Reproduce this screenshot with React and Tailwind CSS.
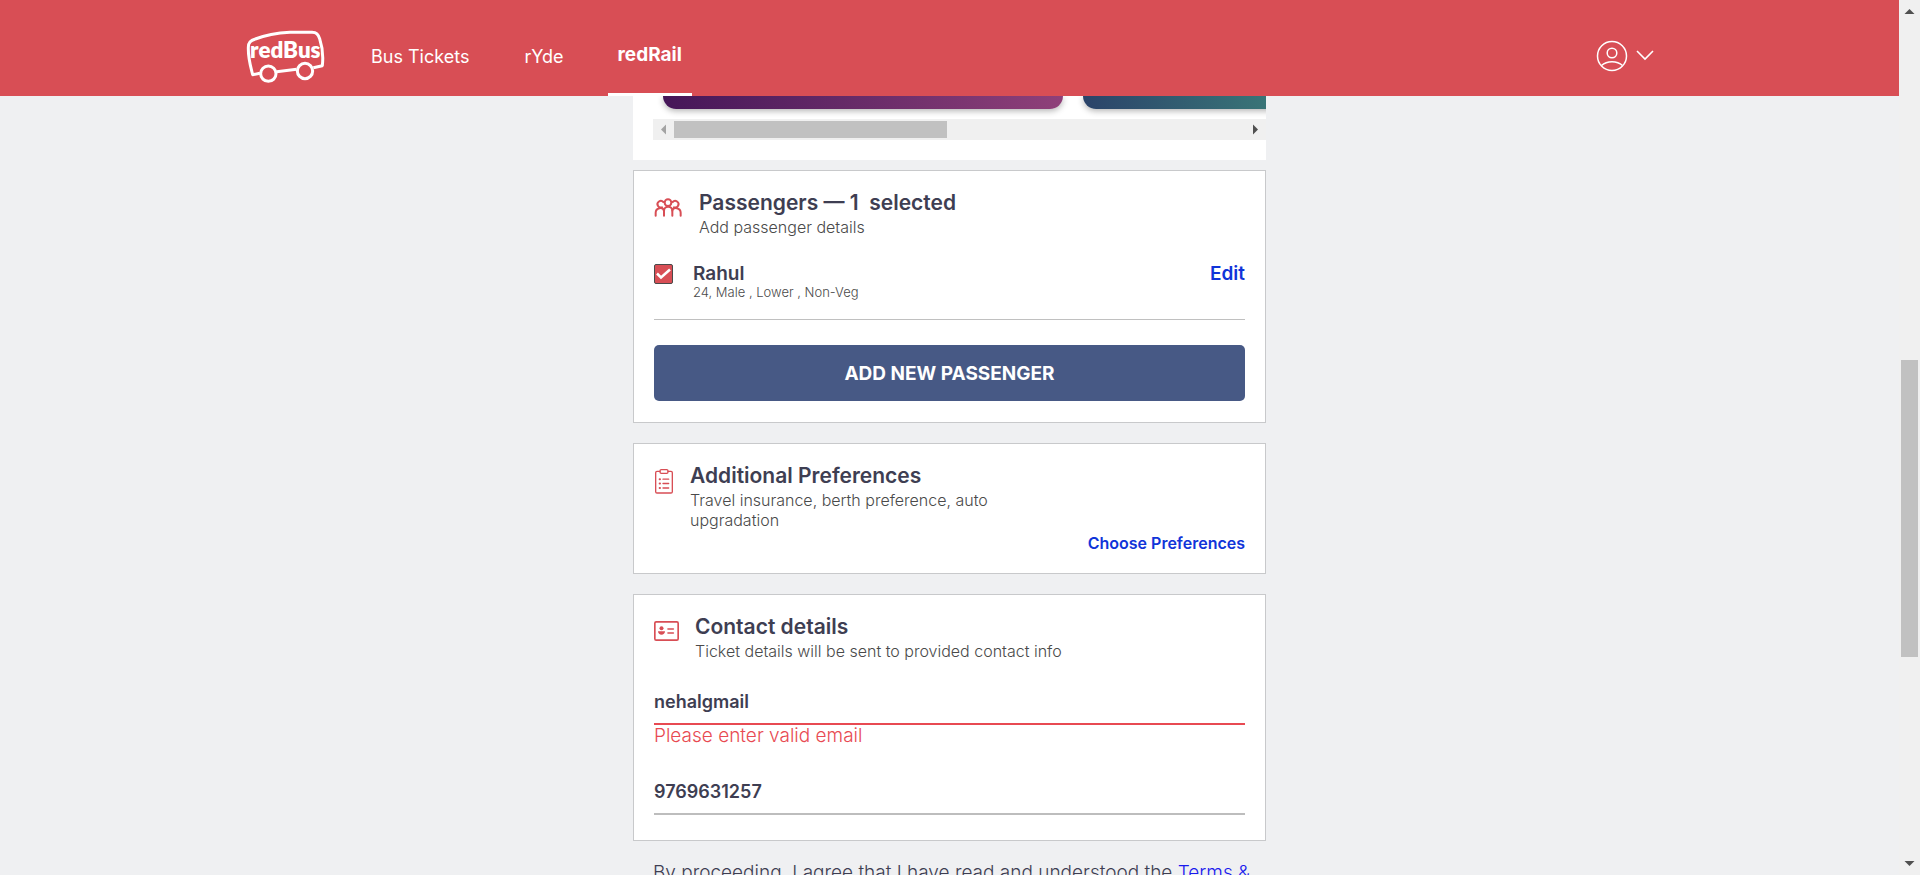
import React from "react";

function BusLogo() {
  return (
    <svg viewBox="45 57 243 168" className="h-14 w-[81px]" fill="none" stroke="#fff" strokeWidth="9" strokeLinejoin="round" role="img" aria-label="redBus">
      <path d="M90 190 L68 194 C61 166 54 145 55 112 C55 97 61 92 76 87 C110 74 145 69 180 67 H246 C260 67 264 73 269 86 C277 110 280 140 277 167 L250 173" />
      <path d="M140 185 L200 178" />
      <circle cx="115" cy="191" r="23" />
      <circle cx="225" cy="183" r="23" />
      <text x="166" y="145" textAnchor="middle" fill="#fff" stroke="none" fontFamily="Lato, 'Open Sans', sans-serif" fontWeight="800" fontSize="67">redBus</text>
    </svg>
  );
}

function PeopleIcon() {
  return (
    <svg viewBox="102 94 87 63" className="mt-2 h-[21px] w-[29px]" fill="none" stroke="#d84e55" strokeWidth="6" strokeLinecap="round">
      <path d="M130 109 A 10 10 0 1 0 126 125" />
      <path d="M158 109 A 10 10 0 1 1 162 125" />
      <circle cx="144" cy="111" r="10" />
      <path d="M107 150 V141 C107 125 129 123 132 135" />
      <path d="M182 150 V141 C182 125 159 123 157 135" />
      <path d="M132 150 V136 C132 119 157 119 157 136 V150" />
    </svg>
  );
}

function ClipboardIcon() {
  return (
    <svg viewBox="102 111 60 81" className="mt-[6px] h-[27px] w-5" fill="none" stroke="#d84e55" strokeWidth="4" strokeLinecap="round">
      <path d="M120 121 H111 Q107 121 107 125 V182 Q107 186 111 186 H153 Q157 186 157 182 V125 Q157 121 153 121 H144" />
      <rect x="120" y="116" width="24" height="11" rx="4" />
      <path d="M129 144.500 H146 M129 157.500 H146 M129 171 H146" />
      <path d="M119 144.500 H120 M119 157.500 H120 M119 171 H120" strokeWidth="6" />
    </svg>
  );
}

function ContactIcon() {
  return (
    <svg viewBox="102 90 75 60" className="mt-2 h-5 w-[25px]" fill="none" stroke="#d84e55" strokeWidth="5" strokeLinecap="round">
      <rect x="104.500" y="92.500" width="70" height="55" rx="4" />
      <path d="M144 114 H160 M144 126 H160" />
      <circle cx="124.500" cy="112" r="6" fill="#d84e55" stroke="none" />
      <path d="M114 121 H135 C135 135 114 135 114 121 Z" fill="#d84e55" stroke="none" />
    </svg>
  );
}

function SectionHead({ icon, iconWidth, title, children }) {
  return (
    <div className="flex">
      <div className={`${iconWidth} shrink-0`}>{icon}</div>
      <div className="min-w-0">
        <h2 className="whitespace-pre text-[21px] leading-7 font-semibold">{title}</h2>
        <p className="max-w-[330px] text-base leading-5 font-light text-[#4a4a4a] has-[span]:max-w-none">{children}</p>
      </div>
    </div>
  );
}

function Card({ className, children }) {
  return <section className={`border border-[#c8c9cb] bg-white px-5 pt-[18px] ${className}`}>{children}</section>;
}

function Header() {
  return (
    <header className="flex h-24 shrink-0 items-center bg-[#d84e55] pr-[245px] pl-[245px] text-white">
      <a href="#home" className="mt-[18px] mr-[45px]"><BusLogo /></a>
      <nav className="flex h-full items-center text-lg">
        <a href="#bus" className="mt-[18px] mr-[55px]">Bus Tickets</a>
        <a href="#ryde" className="mt-[18px] mr-[44px]">rYde</a>
        <a href="#rail" className="flex h-full items-center border-b-3 border-white px-[10px] pt-4 text-[19px] font-bold">redRail</a>
      </nav>
      <button type="button" aria-label="Account" className="mt-4 ml-auto flex items-center gap-2">
        <svg viewBox="0 0 32 32" className="size-8" fill="none" stroke="#fff" strokeWidth="1.500">
          <circle cx="16" cy="16" r="14.500" />
          <circle cx="16" cy="13" r="4.800" />
          <path d="M5.500 25.500 C11 20.500 21 20.500 26.500 25.500" />
        </svg>
        <svg viewBox="0 0 18 12" className="h-3 w-[18px]" fill="none" stroke="#fff" strokeWidth="1.600">
          <path d="M1 1 L9 9 L17 1" />
        </svg>
      </button>
    </header>
  );
}

function Offers() {
  return (
    <div className="bg-white pb-5 pl-5">
      <div className="flex h-[23px] gap-5 overflow-hidden pl-[10px]">
        <div className="h-[13px] w-[400px] shrink-0 rounded-b-2xl bg-linear-to-r from-[#451658] to-[#8f4079] shadow-[0_2px_6px_rgba(0,0,0,0.3)]" />
        <div className="h-[13px] w-[400px] shrink-0 rounded-b-2xl bg-linear-to-r from-[#2b4369] via-[#3a7978] to-[#3a7978] shadow-[0_2px_6px_rgba(0,0,0,0.3)]" />
      </div>
      <div className="flex h-[21px] items-center bg-[#f0f0f0]">
        <svg viewBox="0 0 21 21" className="size-[21px]"><path d="M8 10.500 L13 5.500 V15.500 Z" fill="#a3a3a3" /></svg>
        <div className="h-[17px] w-[273px] bg-[#c1c1c1]" />
        <svg viewBox="0 0 21 21" className="ml-auto size-[21px]"><path d="M13 10.500 L8 5.500 V15.500 Z" fill="#505050" /></svg>
      </div>
    </div>
  );
}

function PageScrollbar() {
  return (
    <div className="flex w-[21px] shrink-0 flex-col items-center bg-[#f0f0f0]">
      <svg viewBox="0 0 21 21" className="size-[21px] shrink-0"><path d="M10.500 9 L15.500 14 H5.500 Z" fill="#505050" /></svg>
      <div className="flex w-full flex-1 flex-col items-center">
        <div className="basis-[339px]" />
        <div className="w-[17px] basis-[297px] bg-[#c1c1c1]" />
      </div>
      <svg viewBox="0 0 21 21" className="size-[21px] shrink-0"><path d="M10.500 12 L15.500 7 H5.500 Z" fill="#505050" /></svg>
    </div>
  );
}

const inputClass = "block h-[45px] w-full border-b-2 bg-transparent text-lg font-semibold outline-none";

export default function App() {
  return (
    <div className="flex h-screen overflow-hidden bg-[#eff0f2] font-['Inter',sans-serif] text-[#3e3e52]">
      <div className="flex min-w-0 flex-1 flex-col overflow-hidden">
        <Header />
        <main className="mx-auto min-h-0 w-1/3 min-w-[560px] flex-1">
          <Offers />

          <Card className="mt-[10px] pb-[21px]">
            <SectionHead icon={<PeopleIcon />} iconWidth="w-[45px]" title={"Passengers — 1  selected"}>Add passenger details</SectionHead>
            <div className="mt-[27px] flex border-b border-[#c0c0c0] pb-[19px]">
              <label className="flex flex-1">
                <span className="grid h-5 w-[39px] shrink-0 grid-cols-[19px]">
                  <input type="checkbox" defaultChecked className="col-start-1 row-start-1 h-5 w-[19px] appearance-none rounded-[2px] border border-[#4a4a4a] bg-[#d84e55]" />
                  <svg viewBox="0 0 19 20" className="pointer-events-none col-start-1 row-start-1 h-5 w-[19px]" fill="none" stroke="#fff" strokeWidth="2.500">
                    <path d="M3 9.500 L7 13.500 L16 5.500" />
                  </svg>
                </span>
                <span>
                  <span className="block text-[19px] leading-5 font-semibold">Rahul</span>
                  <span className="block text-[13px] leading-4 font-light text-[#4a4a4a]">24, Male , Lower , Non-Veg</span>
                </span>
              </label>
              <button type="button" className="self-start text-[19px] leading-5 font-semibold text-[#1034d9]">Edit</button>
            </div>
            <button type="button" className="mt-[25px] block h-14 w-full rounded-[5px] bg-[#475985] pt-[2px] text-[19px] font-bold text-white">ADD NEW PASSENGER</button>
          </Card>

          <Card className="mt-5 pb-5">
            <SectionHead icon={<ClipboardIcon />} iconWidth="w-9" title="Additional Preferences">Travel insurance, berth preference, auto upgradation</SectionHead>
            <button type="button" className="mt-[3px] ml-auto block text-base leading-5 font-semibold text-[#1034d9]">Choose Preferences</button>
          </Card>

          <Card className="mt-5 pb-[25px]">
            <SectionHead icon={<ContactIcon />} iconWidth="w-[41px]" title="Contact details"><span>Ticket details will be sent to provided contact info</span></SectionHead>
            <input type="email" aria-label="Email" defaultValue="nehalgmail" className={`${inputClass} mt-[19px] border-[#e84a52]`} />
            <p className="text-[19px] leading-[22px] font-light text-[#e84a52]">Please enter valid email</p>
            <input type="tel" aria-label="Phone number" defaultValue="9769631257" className={`${inputClass} mt-[23px] border-[#bdbdbd]`} />
          </Card>

          <p className="mt-[19px] pr-3 pl-5 text-[19px] leading-[26px] font-light text-[#3e3e52]">
            By proceeding, I agree that I have read and understood the <a href="#terms" className="text-[#1a1aee]">Terms &amp;</a>
          </p>
        </main>
      </div>
      <PageScrollbar />
    </div>
  );
}
